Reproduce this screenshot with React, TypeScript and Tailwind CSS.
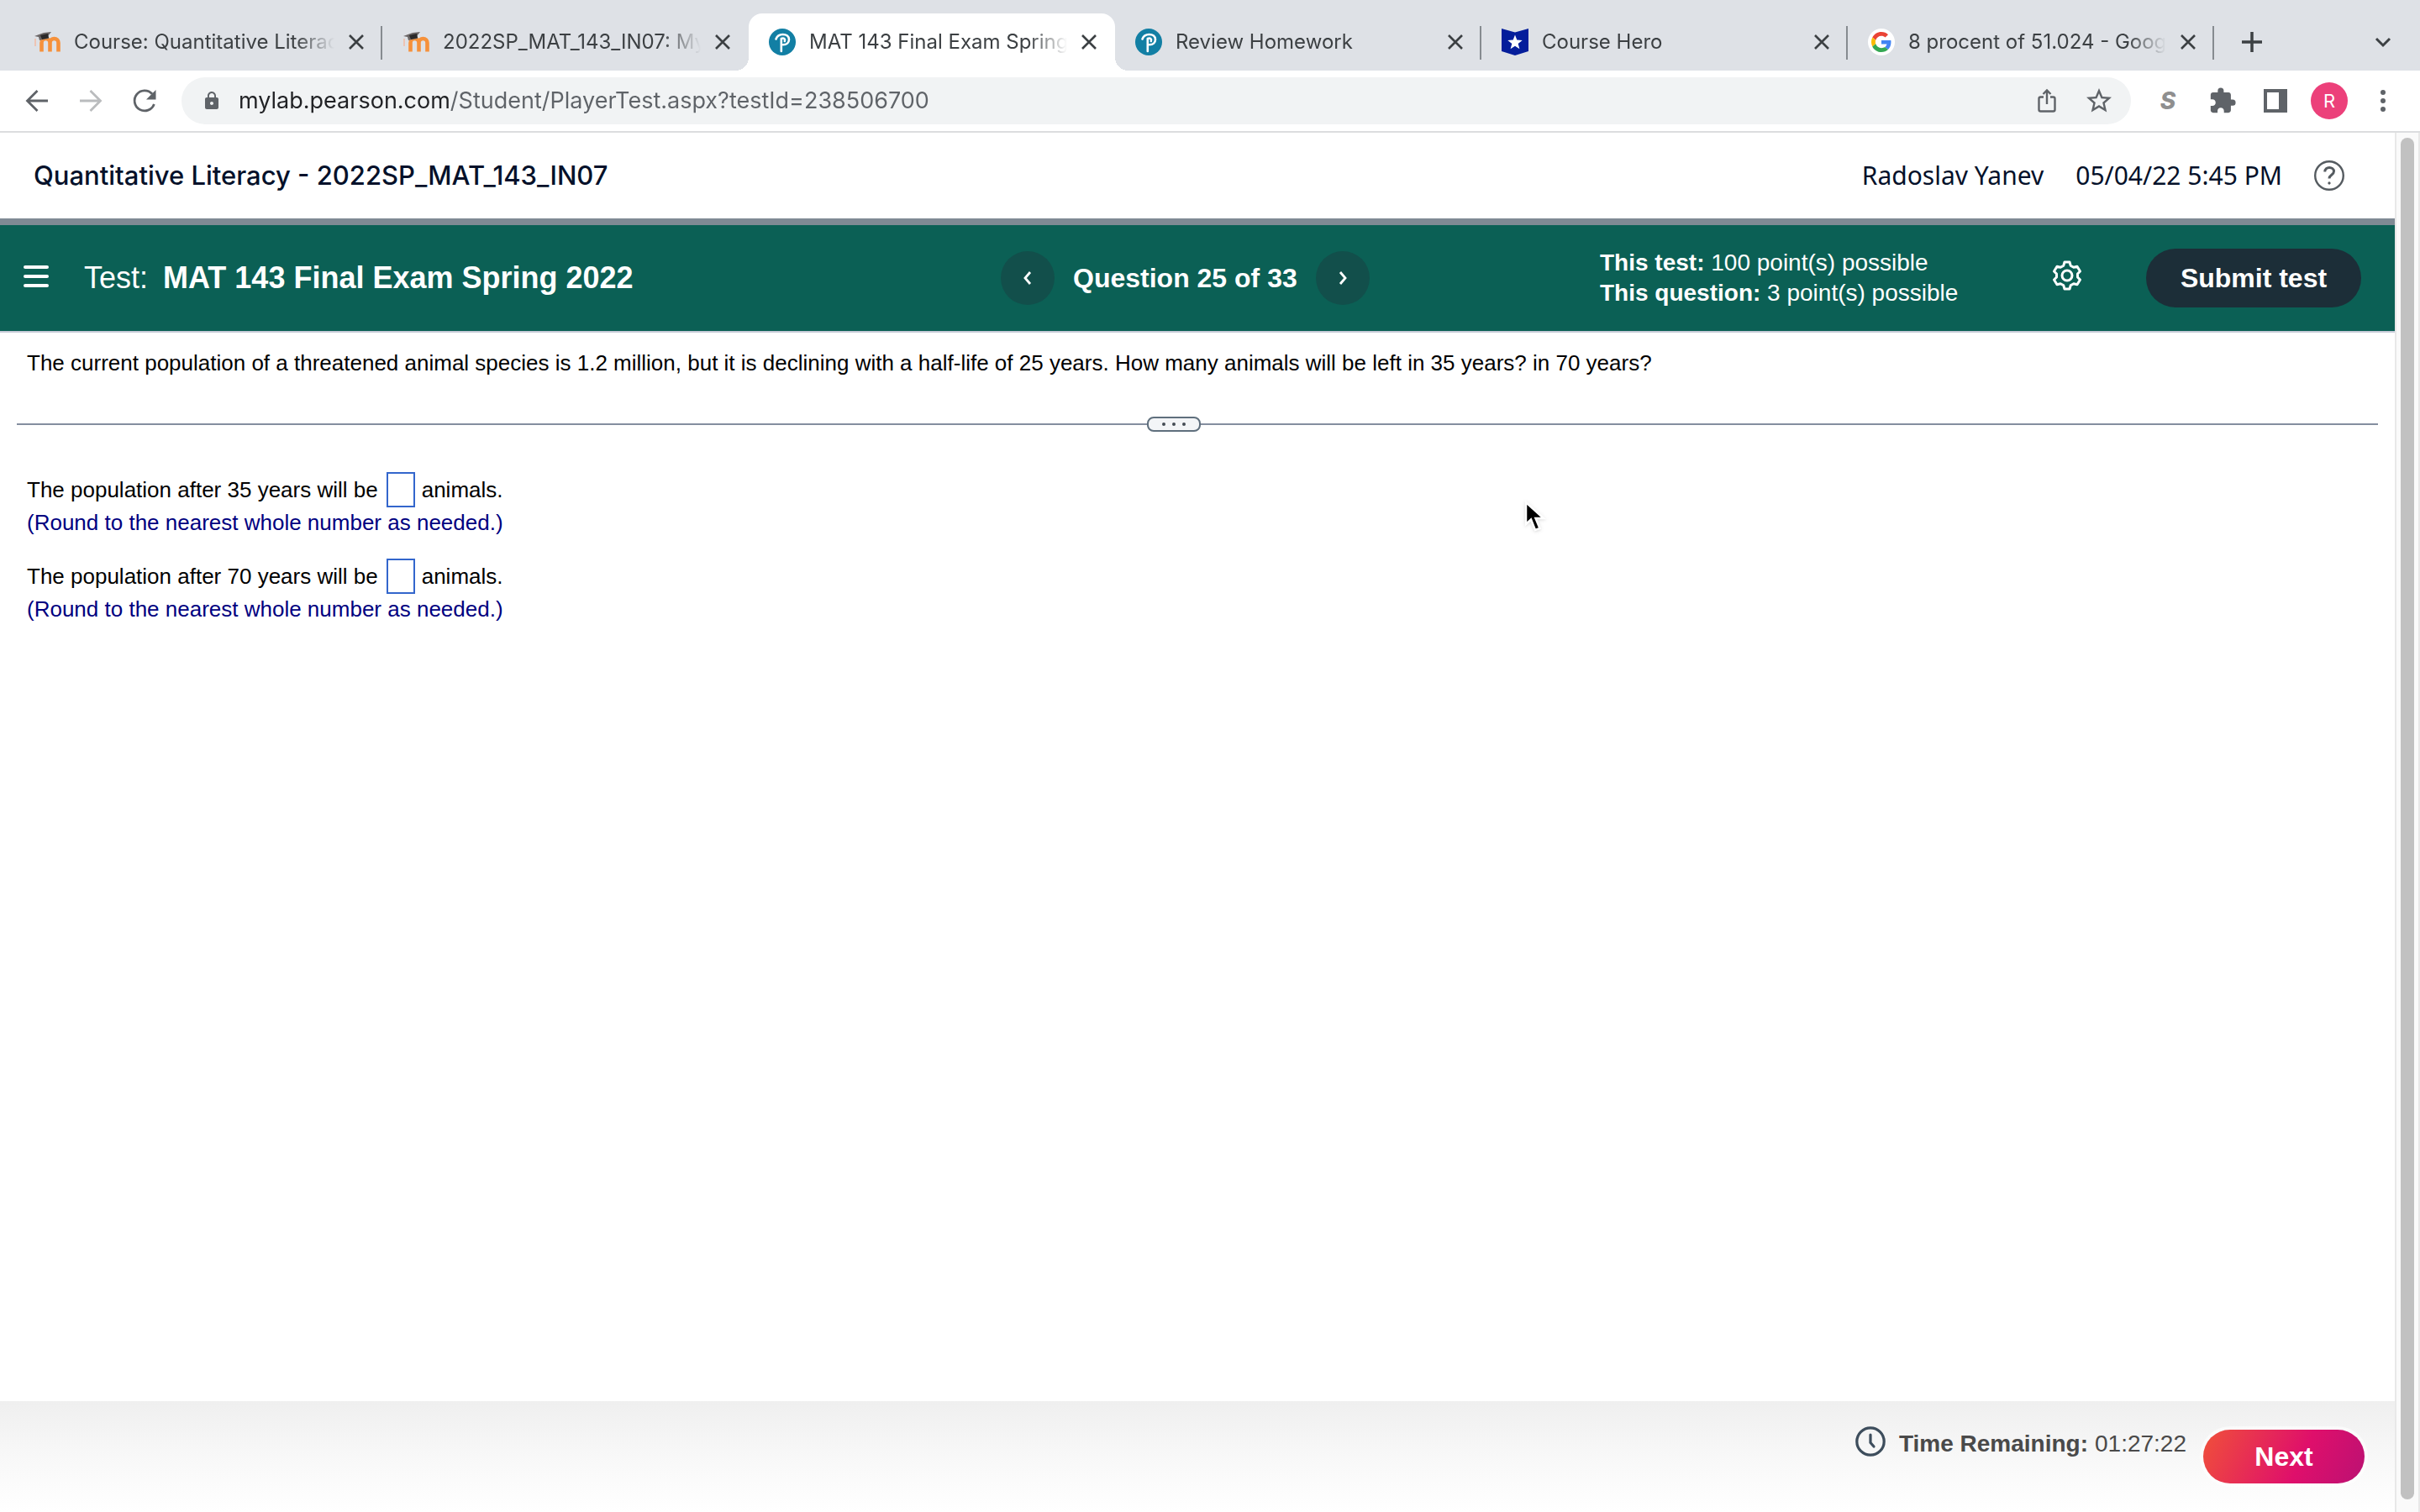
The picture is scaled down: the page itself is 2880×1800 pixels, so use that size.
import React, { useState } from 'react';
import { MdExtension, MdLock, MdStarBorder } from 'react-icons/md';

type IconName = 'moodle' | 'pearson' | 'hero' | 'google';

interface Tab {
  id: number;
  title: string;
  icon: IconName;
  active?: boolean;
  divider?: boolean;
}

const tabs: Tab[] = [
  { id: 1, title: 'Course: Quantitative Literac', icon: 'moodle', divider: true },
  { id: 2, title: '2022SP_MAT_143_IN07: My', icon: 'moodle' },
  { id: 3, title: 'MAT 143 Final Exam Spring', icon: 'pearson', active: true },
  { id: 4, title: 'Review Homework', icon: 'pearson', divider: true },
  { id: 5, title: 'Course Hero', icon: 'hero', divider: true },
  { id: 6, title: '8 procent of 51.024 - Goog', icon: 'google', divider: true },
];

const questions = [
  { id: 'after-35', years: 35 },
  { id: 'after-70', years: 70 },
];

const Favicon: React.FC<{ name: IconName }> = ({ name }) => {
  if (name === 'moodle') {
    return (
      <svg viewBox="0 0 32 32" className="h-8 w-8 shrink-0" aria-hidden="true">
        <path d="M9.5 27.5V17a4.5 4.5 0 0 1 10 0v10.5M19.5 17a4.8 4.8 0 0 1 10 0v10.5" fill="none" stroke="#f6913b" strokeWidth="4.6" />
        <path d="M2 12v9" stroke="#eec4b4" strokeWidth="2" />
        <path d="M1 9 12 5l9-1-4 5 1 3-7 1-4 1-1-4z" fill="#6b6666" />
        <path d="m8 8 9-2 1 5-8 2z" fill="#2b2929" />
      </svg>
    );
  }
  if (name === 'pearson') {
    return (
      <svg viewBox="0 0 32 32" className="h-8 w-8 shrink-0" aria-hidden="true">
        <circle cx="16" cy="16" r="16" fill="#127fa4" />
        <path d="M8.5 12.5C10 8.5 13 7 16.5 7c4.5 0 7.5 2.3 7.5 6s-3 6.3-7 6.3" fill="none" stroke="#fff" strokeWidth="2.6" strokeLinecap="round" />
        <path d="M14.8 12v15M14.8 12c3-1.5 5 .5 4 3" fill="none" stroke="#fff" strokeWidth="2.6" strokeLinecap="round" />
      </svg>
    );
  }
  if (name === 'hero') {
    return (
      <svg viewBox="0 0 32 32" className="h-8 w-8 shrink-0" aria-hidden="true">
        <path d="M0 0l16 4.5L32 0v27l-16 5-16-5z" fill="#051e9b" />
        <path d="m16 7.5 2.3 6.1 6.4.3-5 4.1 1.7 6.3-5.4-3.6-5.4 3.6 1.7-6.3-5-4.1 6.4-.3z" fill="#fff" />
      </svg>
    );
  }
  return (
    <svg viewBox="-8 -8 64 64" className="h-8 w-8 shrink-0" aria-hidden="true">
      <circle cx="24" cy="24" r="32" fill="#fff" />
      <path fill="#EA4335" d="M24 9.5c3.54 0 6.71 1.22 9.21 3.6l6.85-6.85C35.9 2.38 30.47 0 24 0 14.62 0 6.51 5.38 2.56 13.22l7.98 6.19C12.43 13.72 17.74 9.5 24 9.5z" />
      <path fill="#4285F4" d="M46.98 24.55c0-1.57-.15-3.09-.38-4.55H24v9.02h12.94c-.58 2.96-2.26 5.48-4.78 7.18l7.73 6c4.51-4.18 7.09-10.36 7.09-17.65z" />
      <path fill="#FBBC05" d="M10.53 28.59c-.48-1.45-.76-2.99-.76-4.59s.27-3.14.76-4.59l-7.98-6.19C.92 16.46 0 20.12 0 24c0 3.88.92 7.54 2.56 10.78l7.97-6.19z" />
      <path fill="#34A853" d="M24 48c6.48 0 11.93-2.13 15.89-5.81l-7.73-6c-2.15 1.45-4.92 2.3-8.16 2.3-6.26 0-11.57-4.22-13.47-9.91l-7.98 6.19C6.51 42.62 14.62 48 24 48z" />
    </svg>
  );
};

const TabItem: React.FC<{ tab: Tab }> = ({ tab }) => (
  <div
    className={
      'relative flex h-[68px] w-[436px] items-center gap-4 pl-6 pr-[21px] first:w-[439px] ' +
      (tab.active ? 'rounded-t-2xl bg-white' : '')
    }
  >
    {tab.active && (
      <>
        <span className="absolute bottom-0 -left-4 h-4 w-4 bg-[radial-gradient(circle_at_0_0,transparent_16px,white_16px)]" />
        <span className="absolute bottom-0 -right-4 h-4 w-4 bg-[radial-gradient(circle_at_100%_0,transparent_16px,white_16px)]" />
      </>
    )}
    <Favicon name={tab.icon} />
    <a
      href="#"
      className="min-w-0 flex-1 whitespace-nowrap text-[24px] leading-8 text-[#3c4043] [mask-image:linear-gradient(to_right,black_85%,transparent)]"
    >
      {tab.title}
    </a>
    <button type="button" aria-label="Close tab" className="text-[#3c4043]">
      <svg viewBox="0 0 20 20" className="h-5 w-5" fill="none" stroke="currentColor" strokeWidth="2.6">
        <path d="M2 2l16 16M18 2 2 18" />
      </svg>
    </button>
    {tab.divider && <span className="absolute right-0 top-[15px] h-10 w-0.5 bg-[#868b90]" />}
  </div>
);

const TabStrip: React.FC = () => (
  <div className="flex h-[84px] items-end bg-[#dee1e6] pl-4 pr-8">
    {tabs.map((tab) => (
      <TabItem key={tab.id} tab={tab} />
    ))}
    <div className="flex h-[68px] flex-1 items-center justify-between pl-[33px] text-[#3c4043]">
      <button type="button" aria-label="New tab">
        <svg viewBox="0 0 24 24" className="h-6 w-6" fill="none" stroke="currentColor" strokeWidth="3.5">
          <path d="M12 0v24M0 12h24" />
        </svg>
      </button>
      <button type="button" aria-label="Search tabs">
        <svg viewBox="0 0 24 24" className="h-6 w-6" fill="none" stroke="currentColor" strokeWidth="3">
          <path d="m4 8 8 8 8-8" />
        </svg>
      </button>
    </div>
  </div>
);

const Toolbar: React.FC = () => (
  <div className="flex h-[74px] items-center border-b-2 border-[#dcdddf] bg-white px-7 text-[#5f6368]">
    <button type="button" aria-label="Back">
      <svg viewBox="0 0 32 32" className="h-8 w-8" fill="none" stroke="currentColor" strokeWidth="2.8">
        <path d="M29 16H5M16.5 4 4.5 16l12 12" />
      </svg>
    </button>
    <button type="button" aria-label="Forward" className="ml-8 text-[#babcbe]">
      <svg viewBox="0 0 32 32" className="h-8 w-8" fill="none" stroke="currentColor" strokeWidth="2.8">
        <path d="M3 16h24M15.5 4l12 12-12 12" />
      </svg>
    </button>
    <button type="button" aria-label="Reload" className="ml-8">
      <svg viewBox="0 0 32 32" className="h-8 w-8">
        <path d="M27.4 20A12 12 0 1 1 25 7.8" fill="none" stroke="currentColor" strokeWidth="2.8" />
        <path d="M29.5 3v11.5H18z" fill="currentColor" />
      </svg>
    </button>
    <div className="ml-7 flex h-14 flex-1 items-center rounded-full bg-[#f1f3f4] pl-6 pr-5">
      <MdLock className="h-6 w-6" />
      {/* The host is darker than the rest of the address */}
      <input
        aria-label="Address"
        defaultValue="mylab.pearson.com/Student/PlayerTest.aspx?testId=238506700"
        className="ml-5 min-w-0 flex-1 bg-[linear-gradient(to_right,#202124_251px,#5f6368_251px)] bg-clip-text text-[27px] leading-10 text-transparent outline-none"
      />
      <button type="button" aria-label="Share">
        <svg viewBox="0 0 32 32" className="h-8 w-8" fill="none" stroke="currentColor" strokeWidth="2.4">
          <path d="M12 11.5H8.5a2 2 0 0 0-2 2v13a2 2 0 0 0 2 2h15a2 2 0 0 0 2-2v-13a2 2 0 0 0-2-2H20M16 20V3.5M11.500 8 16 3.5 20.5 8" />
        </svg>
      </button>
      <button type="button" aria-label="Bookmark" className="ml-7">
        <MdStarBorder className="h-9 w-9" />
      </button>
    </div>
    <div className="flex items-center pl-7">
      <button type="button" aria-label="Extension" className="w-8 text-[28px] font-extrabold italic leading-8 text-[#8f8f8f]">
        S
      </button>
      <button type="button" aria-label="Extensions" className="ml-8">
        <MdExtension className="h-[34px] w-[34px]" />
      </button>
      <button type="button" aria-label="Side panel" className="ml-8">
        <svg viewBox="0 0 28 28" className="h-7 w-7">
          <path d="M0 0h28v28H0zM4 4v20h14V4z" fill="currentColor" fillRule="evenodd" />
        </svg>
      </button>
      <button type="button" aria-label="Profile" className="ml-7 h-11 w-11 rounded-full bg-[#ec407a] text-[22px] text-white">
        R
      </button>
      <button type="button" aria-label="Menu" className="ml-[26px]">
        <svg viewBox="0 0 32 32" className="h-8 w-8" fill="currentColor">
          <circle cx="16" cy="6" r="3" />
          <circle cx="16" cy="16" r="3" />
          <circle cx="16" cy="26" r="3" />
        </svg>
      </button>
    </div>
  </div>
);

const CourseHeader: React.FC = () => (
  <header className="flex h-[110px] items-center justify-between border-b-8 border-[#7f8a94] pl-10 pr-[60px] text-[#05112a]">
    <h1 className="text-[31px] font-medium leading-10">Quantitative Literacy - 2022SP_MAT_143_IN07</h1>
    <div className="flex items-center gap-[38px] font-['Noto_Sans',sans-serif] text-[30px] leading-10">
      <span>Radoslav Yanev</span>
      <span>05/04/22 5:45 PM</span>
      <button type="button" aria-label="Help" className="text-[#555b60]">
        <svg viewBox="0 0 36 36" className="h-9 w-9" fill="none" stroke="currentColor" strokeWidth="2.4">
          <circle cx="18" cy="18" r="16.8" />
          <path d="M12.8 13.5c0-7 10.7-6.5 10.7-.5 0 4.5-5.5 4-5.5 8.5" strokeWidth="3" />
          <circle cx="18" cy="27" r="1.2" fill="currentColor" strokeWidth="1" />
        </svg>
      </button>
    </div>
  </header>
);

const TestBar: React.FC = () => (
  <div className="grid h-32 grid-cols-[1191fr_713fr_946fr] items-center border-b-2 border-[#c7cbd8] bg-[#0b6055] font-['Liberation_Sans',Arial,sans-serif] text-white">
    <div className="flex items-center pl-7">
      <button type="button" aria-label="Open menu" className="mb-1 flex w-[30px] flex-col gap-[7px]">
        <span className="h-1 rounded-full bg-white" />
        <span className="h-1 rounded-full bg-white" />
        <span className="h-1 rounded-full bg-white" />
      </button>
      <h2 className="ml-[42px] flex gap-[18px] text-[36px] leading-10">
        <span>Test:</span>
        <strong>MAT 143 Final Exam Spring 2022</strong>
      </h2>
    </div>
    <div className="flex items-center gap-[22px]">
      <button type="button" aria-label="Previous question" className="flex h-16 w-16 items-center justify-center rounded-full bg-[#124f4b]">
        <svg viewBox="0 0 16 16" className="h-4 w-4" fill="none" stroke="currentColor" strokeWidth="2.8">
          <path d="m11 1-6 7 6 7" />
        </svg>
      </button>
      <span className="text-[32px] font-bold leading-10">Question 25 of 33</span>
      <button type="button" aria-label="Next question" className="flex h-16 w-16 items-center justify-center rounded-full bg-[#124f4b]">
        <svg viewBox="0 0 16 16" className="h-4 w-4" fill="none" stroke="currentColor" strokeWidth="2.8">
          <path d="m5 1 6 7-6 7" />
        </svg>
      </button>
    </div>
    <div className="flex items-center justify-between pr-10">
      <div className="text-[28px] leading-9">
        <div>
          <strong>This test:</strong> 100 point(s) possible
        </div>
        <div>
          <strong>This question:</strong> 3 point(s) possible
        </div>
      </div>
      <div className="flex items-center gap-[76px]">
        <button type="button" aria-label="Settings" className="mb-1.5">
          <svg viewBox="0 0 36 36" className="h-9 w-9" fill="none" stroke="currentColor" strokeWidth="3" strokeLinejoin="round">
            <path d="M15 2h6l1.2 4.2 3.6 2.1L30 7.2l3.5 5.8-3 3v4l3 3-3.5 5.8-4.2-1.1-3.6 2.1L21 34h-6l-1.2-4.2-3.6-2.1L6 28.800 2.500 23l3-3v-4l-3-3L6 7.200l4.200 1.100 3.600-2.100z" />
            <circle cx="18" cy="18" r="6" />
          </svg>
        </button>
        <button type="button" className="h-[70px] w-64 rounded-full bg-[#1c2e38] text-[32px] font-bold">
          Submit test
        </button>
      </div>
    </div>
  </div>
);

const App: React.FC = () => {
  const [answers, setAnswers] = useState<Record<string, string>>({});

  return (
    <div className="flex min-h-screen flex-col bg-white font-[Inter,sans-serif]">
      <TabStrip />
      <Toolbar />

      <div className="flex flex-1">
        <div className="relative flex min-w-0 flex-1 flex-col">
          <CourseHeader />
          <TestBar />

          <main className="flex-1 font-['Liberation_Sans',Arial,sans-serif] text-[26px] leading-9 text-black">
            <p className="px-8 pt-[18px]">
              The current population of a threatened animal species is 1.2 million, but it is declining with a half-life of 25 years. How many animals will be left in 35 years? in 70 years?
            </p>

            {/* Splitter between the question and the answer area */}
            <div className="mt-[46px] flex items-center px-5">
              <span className="h-0.5 w-[1345px] shrink bg-[#848e9f]" />
              <button
                type="button"
                aria-label="Resize question area"
                className="flex h-[18px] w-16 shrink-0 items-center justify-center gap-2 rounded-lg border-2 border-[#5f6f7d] bg-[#f3f5f7]"
              >
                <span className="h-1 w-1 rounded-full bg-[#444c54]" />
                <span className="h-1 w-1 rounded-full bg-[#444c54]" />
                <span className="h-1 w-1 rounded-full bg-[#444c54]" />
              </button>
              <span className="h-0.5 flex-1 bg-[#848e9f]" />
            </div>

            <div className="mt-12 flex flex-col gap-[25px] px-8">
              {questions.map((q) => (
                <div key={q.id}>
                  <div className="flex h-[42px] items-center">
                    <label htmlFor={q.id}>The population after {q.years} years will be</label>
                    <input
                      id={q.id}
                      value={answers[q.id] ?? ''}
                      onChange={(e) => setAnswers({ ...answers, [q.id]: e.target.value })}
                      className="ml-[10px] mr-2 h-[42px] w-[34px] border-2 border-[#3366cc] bg-white px-1 outline-none"
                    />
                    <span>animals.</span>
                  </div>
                  <p className="text-[#000080]">(Round to the nearest whole number as needed.)</p>
                </div>
              ))}
            </div>
          </main>

          <footer className="flex h-[132px] items-start justify-end bg-linear-to-b from-[#efefef] via-[#f8f8f8] to-white pr-9 pt-[30px] font-['Liberation_Sans',Arial,sans-serif] text-[28px] leading-[42px] text-[#4a4a4a]">
            <svg viewBox="0 0 36 36" className="h-9 w-9" fill="none" stroke="#3d4d5c" strokeWidth="3.2" strokeLinecap="round" aria-hidden="true">
              <circle cx="18" cy="18" r="16.2" />
              <path d="M18 10v9.5l4 4.5" />
            </svg>
            <strong className="ml-4">Time Remaining:</strong>
            <span className="ml-2">01:27:22</span>
            <button
              type="button"
              className="ml-5 mt-1 h-16 w-48 rounded-full bg-[linear-gradient(115deg,#f0503a,#df0f6b_60%,#bb1173)] text-[32px] font-bold text-white ring-4 ring-white/60"
            >
              Next
            </button>
          </footer>

          {/* Mouse pointer */}
          <svg viewBox="0 0 26 38" className="absolute left-[1814px] top-[438px] h-[38px] w-[26px] drop-shadow" aria-hidden="true">
            <path d="M2 2v26l6-5.5L13 35l5.5-2-5-12H23z" fill="#000" stroke="#fff" strokeWidth="2.5" />
          </svg>
        </div>

        {/* Scrollbar */}
        <div className="flex w-[30px] justify-center border-x-2 border-[#e8e8e8] bg-[#fafafa] pb-[15px] pt-1.5">
          <div className="w-4 rounded-full bg-[#c1c1c1]" />
        </div>
      </div>
    </div>
  );
};

export default App;
